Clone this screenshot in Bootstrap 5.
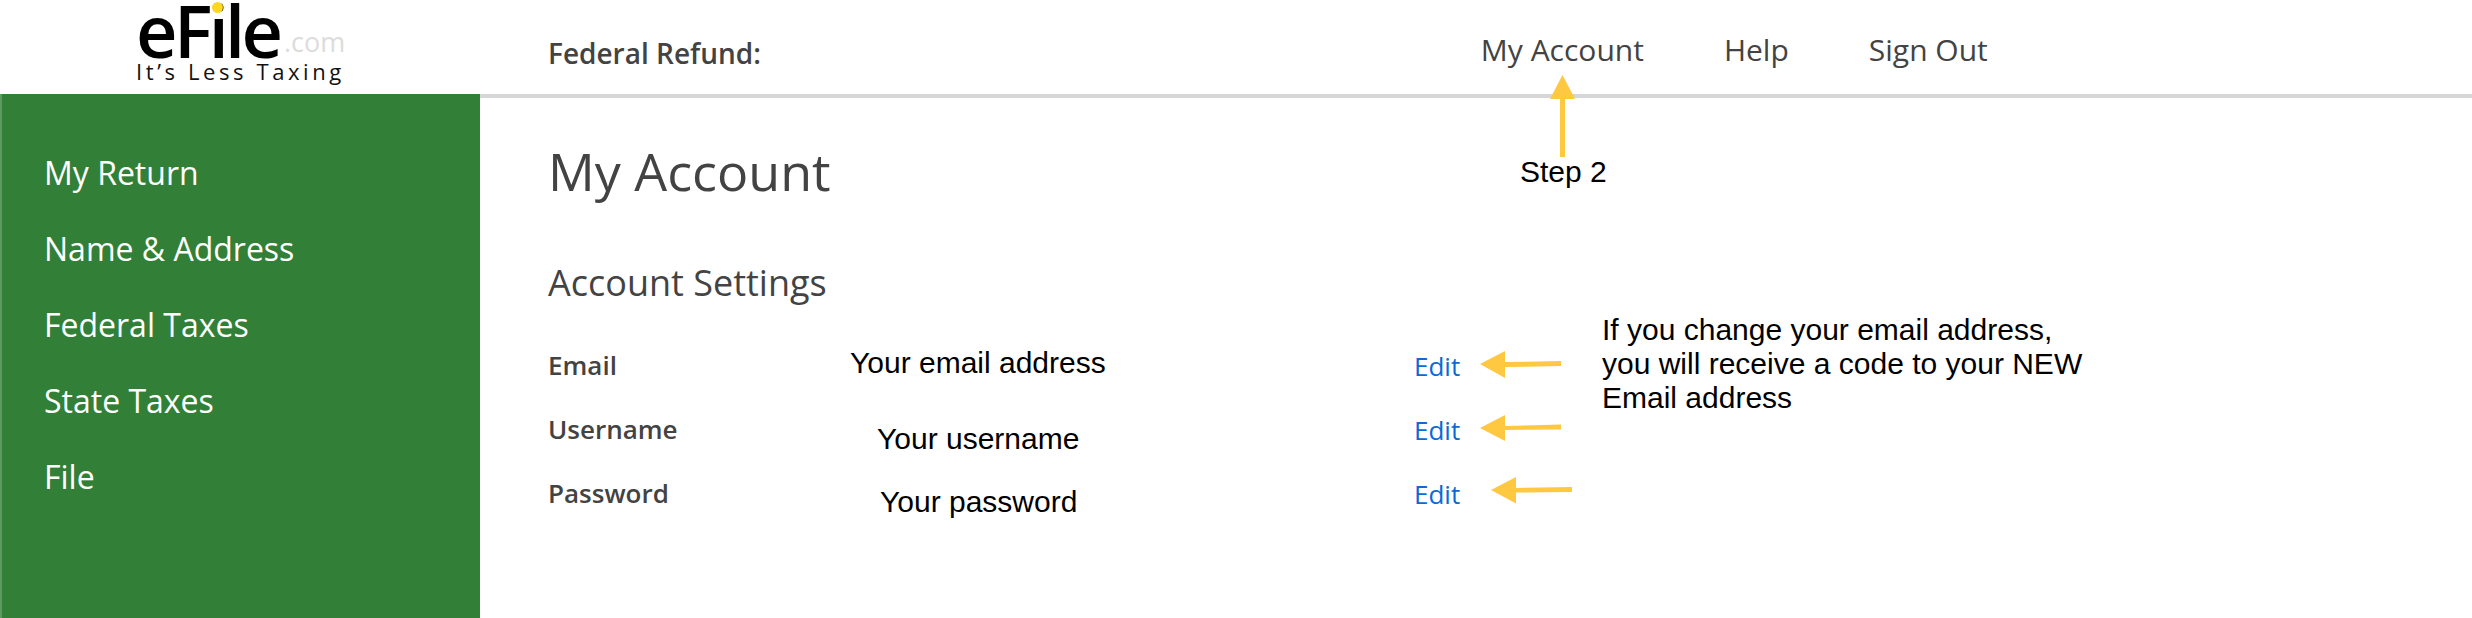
<!DOCTYPE html>
<html lang="en">
<head>
    <meta charset="UTF-8">
    <meta name="viewport" content="width=device-width, initial-scale=1.0">
    <title>My Account</title>
    <link href="https://cdn.jsdelivr.net/npm/bootstrap@5.3.2/dist/css/bootstrap.min.css" rel="stylesheet">
    <style>
        body { font-family: "Open Sans", sans-serif; color: #434343; background: #fff; overflow: hidden; }
        .page-wrap { width: 2472px; height: 618px; }
        .top-bar { height: 94px; }
        .logo-col { width: 480px; padding-left: 136px; }
        .logo-box { width: 210px; height: 94px; }
        .logo-main { font-size: 72px; font-weight: 600; letter-spacing: -3.6px; line-height: 58px; color: #000; top: 1px; left: 0; }
        .logo-com { font-size: 27px; color: #dcdcdc; line-height: 1; top: 28px; left: 148px; }
        .logo-tag { font-size: 22px; letter-spacing: 3.6px; line-height: 1; color: #111; top: 60px; left: 0; white-space: nowrap; }
        .logo-dot { width: 11px; height: 11px; border-radius: 50%; background: #fdd81f; top: 2px; left: 76px; }
        .refund-label { font-size: 28px; font-weight: 600; margin-left: 68px; padding-top: 11px; }
        .top-links { margin-left: 720px; gap: 80px; margin-top: 5px; }
        .top-links a { font-size: 30px; color: #434343; text-decoration: none; padding: 0; }
        .body-wrap { height: 524px; }
        .side-menu { width: 480px; background: #327f37; border-left: 2px solid #5c9a60; padding: 41px 0 0 42px; }
        .side-menu a { color: #fff; font-size: 32px; line-height: 76px; padding: 0; }
        .main-area { border-top: 4px solid #d6d6d6; padding: 38px 0 0 68px; }
        .main-title { font-size: 52px; font-weight: 400; line-height: 70px; margin: 0; color: #434343; }
        .sub-title { font-size: 36px; font-weight: 400; line-height: 48px; margin: 53px 0 27px; color: #434343; }
        .setting-row { height: 64px; display: flex; align-items: center; }
        .setting-name { width: 866px; font-size: 26px; font-weight: 600; margin-top: -2px; }
        .setting-edit { font-size: 26px; color: #0a6ad6; text-decoration: none; }
        .note { font-family: "Liberation Sans", Arial, sans-serif; font-size: 30px; line-height: 34px; color: #000; white-space: nowrap; }
        .step-label { left: 1520px; top: 155px; }
        .val-email { left: 850px; top: 346px; }
        .val-user { left: 877px; top: 422px; }
        .val-pass { left: 880px; top: 485px; }
        .note-email { left: 1602px; top: 313px; }
        .arrow-layer { left: 0; top: 0; pointer-events: none; }
    </style>
</head>
<body>
    <div class="page-wrap position-relative">
        <header class="top-bar d-flex align-items-center">
            <div class="logo-col">
                <div class="logo-box position-relative">
                    <span class="logo-main position-absolute">eFile</span>
                    <span class="logo-dot position-absolute"></span>
                    <span class="logo-com position-absolute">.com</span>
                    <span class="logo-tag position-absolute">It’s Less Taxing</span>
                </div>
            </div>
            <div class="refund-label">Federal Refund:</div>
            <nav class="nav top-links">
                <a class="nav-link" href="#">My Account</a>
                <a class="nav-link" href="#">Help</a>
                <a class="nav-link" href="#">Sign Out</a>
            </nav>
        </header>

        <div class="body-wrap d-flex">
            <nav class="side-menu nav flex-column flex-nowrap">
                <a class="nav-link" href="#">My Return</a>
                <a class="nav-link" href="#">Name &amp; Address</a>
                <a class="nav-link" href="#">Federal Taxes</a>
                <a class="nav-link" href="#">State Taxes</a>
                <a class="nav-link" href="#">File</a>
            </nav>
            <main class="main-area flex-grow-1">
                <h1 class="main-title">My Account</h1>
                <h2 class="sub-title">Account Settings</h2>
                <div class="setting-row">
                    <div class="setting-name">Email</div>
                    <a class="setting-edit" href="#">Edit</a>
                </div>
                <div class="setting-row">
                    <div class="setting-name">Username</div>
                    <a class="setting-edit" href="#">Edit</a>
                </div>
                <div class="setting-row">
                    <div class="setting-name">Password</div>
                    <a class="setting-edit" href="#">Edit</a>
                </div>
            </main>
        </div>

        <!-- notas encima de la captura -->
        <div class="note position-absolute step-label">Step 2</div>
        <div class="note position-absolute val-email">Your email address</div>
        <div class="note position-absolute val-user">Your username</div>
        <div class="note position-absolute val-pass">Your password</div>
        <div class="note position-absolute note-email">If you change your email address,<br>you will receive a code to your NEW<br>Email address</div>

        <svg class="arrow-layer position-absolute" width="2472" height="618" viewBox="0 0 2472 618">
            <g fill="#fec841">
                <path d="M1560 157V99h-10l12.500-24 12.500 24h-10v58z"/>
                <path d="M1561 361v5l-56 1v11l-25-14 25-13v11z"/>
                <path d="M1561 424.500v5l-56 .5v11l-25-13 25-13v11z"/>
                <path d="M1572 487v5l-56 .5v11l-25-13.500 25-13v11z"/>
            </g>
        </svg>
    </div>
    <script src="https://cdn.jsdelivr.net/npm/bootstrap@5.3.2/dist/js/bootstrap.bundle.min.js"></script>
</body>
</html>
